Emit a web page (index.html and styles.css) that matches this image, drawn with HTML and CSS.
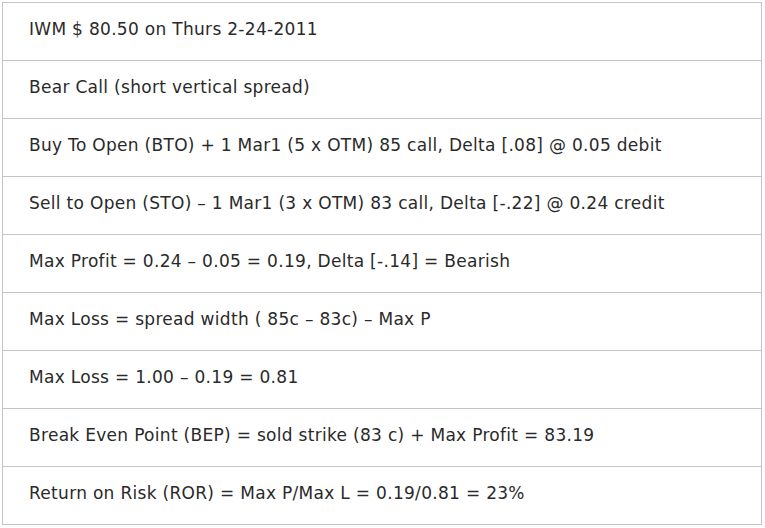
FILE: index.html
```html
<!DOCTYPE html>
<html>
<head>
<meta charset="utf-8">
<link rel="stylesheet" href="styles.css">
</head>
<body>
<div class="sheet">
  <div class="row">IWM $ 80.50 on Thurs 2-24-2011</div>
  <div class="row">Bear Call (short vertical spread)</div>
  <div class="row">Buy To Open (BTO) + 1 Mar1 (5 x OTM) 85 call, Delta [.08] @ 0.05 debit</div>
  <div class="row">Sell to Open (STO) – 1 Mar1 (3 x OTM) 83 call, Delta [-.22] @ 0.24 credit</div>
  <div class="row">Max Profit = 0.24 – 0.05 = 0.19, Delta [-.14] = Bearish</div>
  <div class="row">Max Loss = spread width ( 85c – 83c) – Max P</div>
  <div class="row">Max Loss = 1.00 – 0.19 = 0.81</div>
  <div class="row">Break Even Point (BEP) = sold strike (83 c) + Max Profit = 83.19</div>
  <div class="row">Return on Risk (ROR) = Max P/Max L = 0.19/0.81 = 23%</div>
</div>
</body>
</html>
```
FILE: styles.css
```css
html, body {
  margin: 0;
  padding: 0;
  background: #ffffff;
}
body {
  padding: 2px;
}
.sheet {
  width: 758px;
  border: 1px solid #c4c4c4;
  border-top: none;
  font-family: "DejaVu Sans", Verdana, sans-serif;
  font-size: 17px;
  letter-spacing: 0.3px;
  color: #2a2a2a;
}
.row {
  border-top: 1px solid #c4c4c4;
  display: flex;
  align-items: center;
  padding: 0 0 5px 26px;
  height: 52px;
  white-space: nowrap;
}
```
